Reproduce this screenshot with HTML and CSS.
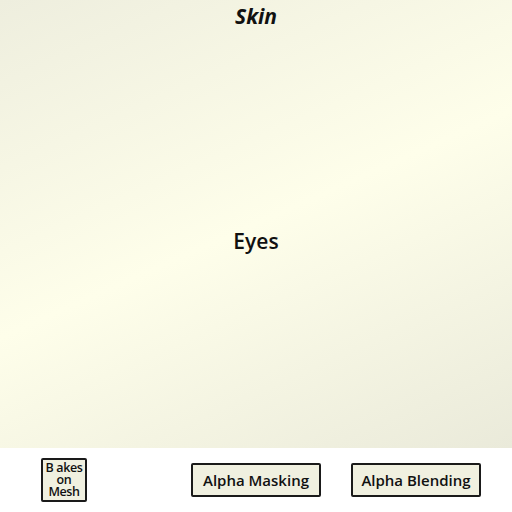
FILE: index.html
```html
<!DOCTYPE html>
<html>
<head>
<meta charset="utf-8">
<link rel="stylesheet" href="styles.css">
</head>
<body>
<div class="panel">
  <div class="title-skin">Skin</div>
  <div class="title-eyes">Eyes</div>
</div>
<div class="footer">
  <button class="btn btn-bom"><span>B akes</span><span>on</span><span>Mesh</span></button>
  <button class="btn btn-wide btn-mask">Alpha Masking</button>
  <button class="btn btn-wide">Alpha Blending</button>
</div>
</body>
</html>
```
FILE: styles.css
```css
html, body {
  margin: 0;
  padding: 0;
  width: 512px;
  height: 512px;
  background: #ffffff;
  font-family: "Open Sans", "DejaVu Sans", sans-serif;
  color: #111;
}
.panel {
  height: 448px;
  display: flex;
  flex-direction: column;
  align-items: center;
  background: linear-gradient(156deg, #eeeede 0%, #fefeea 50%, #eaeada 100%);
}
.title-skin {
  font-size: 21px;
  font-weight: 700;
  font-style: italic;
  line-height: 32px;
}
.title-eyes {
  font-size: 21px;
  font-weight: 600;
  line-height: 32px;
  margin-top: 193px;
}
.footer {
  height: 64px;
  display: flex;
  align-items: center;
  padding-left: 41px;
}
.btn {
  box-sizing: border-box;
  background: #f0f0e0;
  border: 2px solid #1a1a1a;
  border-radius: 2px;
  font-family: inherit;
  color: #111;
  padding: 0;
  display: flex;
  align-items: center;
  justify-content: center;
}
.btn-bom {
  width: 46px;
  height: 44px;
  flex-direction: column;
  font-size: 12.5px;
  line-height: 12px;
  font-weight: 600;
  letter-spacing: -0.4px;
}
.btn-bom span {
  display: block;
  height: 12px;
}
.btn-wide {
  width: 130px;
  height: 34px;
  font-size: 15px;
  font-weight: 600;
}
.btn-mask {
  margin-left: 104px;
  margin-right: 30px;
}
```
